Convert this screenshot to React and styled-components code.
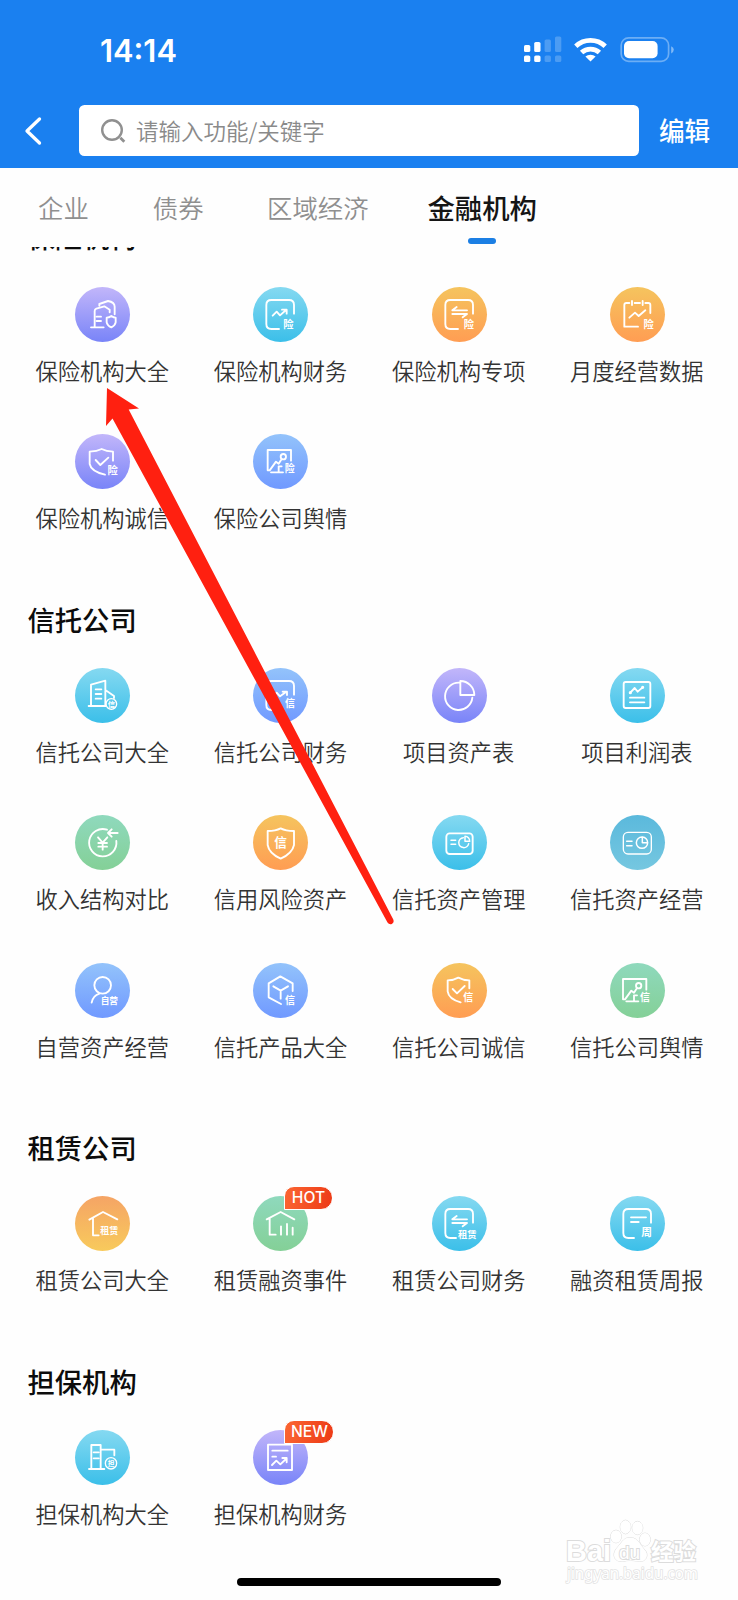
import React from 'react';
import styled, { createGlobalStyle } from 'styled-components';

const GlobalStyle = createGlobalStyle`
  * { box-sizing: border-box; }
  body {
    margin: 0;
    background: #fff;
    font-family: "Noto Sans CJK SC", "Noto Sans", sans-serif;
  }
`;

const Screen = styled.div`
  position: relative;
  width: 738px;
  height: 1600px;
  overflow: hidden;
  background: #fefefe;
  display: flex;
  flex-direction: column;
`;

const Header = styled.header`
  flex: none;
  height: 168px;
  background: #1a80f0;
  color: #fff;
`;

const StatusBar = styled.div`
  height: 105px;
  padding: 32px 64px 0 100px;
  display: flex;
  justify-content: space-between;
  align-items: flex-start;
`;

const Clock = styled.span`
  padding-top: 0.6px;
  font: 600 30.8px/36px Inter, sans-serif;
`;

const StatusIcons = styled.svg`
  display: block;
  width: 152px;
  height: 36px;
`;

const SearchRow = styled.div`
  display: flex;
  align-items: center;
  height: 51px;
`;

const BackButton = styled.button`
  width: 79px;
  height: 51px;
  padding: 0 0 0 23px;
  border: 0;
  background: none;
  text-align: left;
  svg { display: block; }
`;

const SearchBox = styled.div`
  width: 559.5px;
  height: 51px;
  border-radius: 5.5px;
  background: #fff;
  display: flex;
  align-items: center;
  padding: 0 0 2px 21px;
  gap: 10px;
  color: #8a8a8a;
  font-size: 22.5px;
  line-height: 30px;
  font-weight: 350;
  svg { display: block; flex: none; }
`;

const EditButton = styled.button`
  border: 0;
  background: none;
  padding: 0 0 2px;
  margin-left: 20.5px;
  color: #fff;
  font: 500 25.6px/34px "Noto Sans CJK SC", sans-serif;
`;

const Tabs = styled.nav`
  flex: none;
  height: 79px;
  background: #fefefe;
  padding: 19px 0 0 38px;
  display: flex;
  align-items: flex-start;
`;

const Tab = styled.div`
  display: flex;
  flex-direction: column;
  align-items: center;
  gap: 11.3px;
  margin-right: ${(p) => p.$after || 0}px;
  font-size: ${(p) => (p.$active ? 27.4 : 25.4)}px;
  font-weight: ${(p) => (p.$active ? 500 : 350)};
  line-height: 40px;
  color: ${(p) => (p.$active ? '#151515' : '#8f8f8f')};
`;

const TabMark = styled.i`
  width: 27.5px;
  height: 5.6px;
  border-radius: 3px;
  background: #1c7fe4;
`;

const Content = styled.main`
  flex: 1;
  overflow: hidden;
`;

const Sections = styled.div`
  margin-top: -46.2px;
`;

const SectionTitle = styled.h2`
  margin: 0;
  height: 86.2px;
  padding: ${(p) => (p.$scrolled ? 14.7 : 16.8)}px 0 0 27.5px;
  font-size: 27.3px;
  line-height: 40px;
  font-weight: 500;
  color: #0c0c0c;
`;

const Grid = styled.div`
  display: grid;
  grid-template-columns: repeat(4, 178.2px);
  grid-auto-rows: 147.4px;
  padding-left: 13.7px;
`;

const Tile = styled.div`
  display: flex;
  flex-direction: column;
  align-items: center;
`;

const TONES = {
  purple: ['#c2b6fa', '#7984f8'],
  cyan: ['#85d9f1', '#3bbfe9'],
  orange: ['#f5c45e', '#ff9d53'],
  blue: ['#93c3fb', '#7099ff'],
  green: ['#8fd9bd', '#84d097'],
  teal: ['#5bb9dc', '#75c7e0'],
  amber: ['#f5a465', '#f8ca5c'],
};

const Disc = styled.div`
  position: relative;
  width: 55px;
  height: 55px;
  border-radius: 50%;
  background: linear-gradient(${(p) => TONES[p.$tone].join(', ')});
`;

const Glyph = styled.svg`
  display: block;
  width: 55px;
  height: 55px;
  fill: none;
  stroke: #fff;
  stroke-width: 5.6;
  stroke-linejoin: round;
  stroke-linecap: round;
  text {
    fill: #fff;
    stroke: none;
    font-family: "Noto Sans CJK SC", sans-serif;
    font-weight: 700;
    text-anchor: middle;
  }
`;

const Badge = styled.span`
  position: absolute;
  left: 31px;
  top: -10px;
  height: 24px;
  padding: 0 ${(p) => p.$pad}px;
  border: 1px solid #fff;
  border-radius: 10px 12px 12px 0;
  background: linear-gradient(100deg, #fb6632, #ed3a16);
  color: #fff;
  font: 500 15.6px/22.5px Inter, "Liberation Sans", sans-serif;
  white-space: nowrap;
`;

const Label = styled.span`
  margin: 13px 1px 0 0;
  font-size: 22.25px;
  line-height: 30px;
  font-weight: 350;
  color: #333;
  white-space: nowrap;
`;

const Pointer = styled.svg`
  position: absolute;
  left: 100px;
  top: 380px;
  width: 300px;
  height: 550px;
`;

const HomeIndicator = styled.div`
  position: absolute;
  left: 237px;
  top: 1578px;
  width: 264px;
  height: 8px;
  border-radius: 4px;
  background: #000;
`;

const Watermark = styled.svg`
  position: absolute;
  left: 560px;
  top: 1514px;
  width: 146px;
  height: 76px;
  fill: #fff;
  stroke: #dcdcdc;
  stroke-width: 1;
  paint-order: stroke;
`;

const Mark = ({ x, y, size = 31, children }) => (
  <text x={x} y={y + size * 0.37} fontSize={size}>{children}</text>
);

const Frame = ({ end = 78 }) => (
  <path d={`M${end} 126H55Q40 126 40 111V54Q40 39 55 39H108Q123 39 123 54V80`} />
);

const Screenboard = () => (
  <path d="M114 80V48H44V109H50L69 83L77 89L86 75M99 68A8 8 0 1 1 83 68A8 8 0 1 1 99 68M86 97H77V115M54 115H90" />
);

const ICONS = {
  buildingShield: (
    <path d="M59 119V72Q59 67 64 65L88 58L104 68V76M73 56V51L99 42Q119 45 119 59V82M48 121H86M65 89H78M65 102H78M109 87Q116 92 122 92V106Q120 116 109 121Q97 116 95 106V92Q102 92 109 87Z" />
  ),
  chartRisk: (
    <>
      <Frame />
      <path d="M59 86L71 74L81 85L99 69M87 68H101V80" />
      <Mark x={106} y={112}>险</Mark>
    </>
  ),
  swapRisk: (
    <>
      <Frame />
      <path d="M105 70H61L74 60M61 81H105L92 91" />
      <Mark x={111} y={112}>险</Mark>
    </>
  ),
  calendarRisk: (
    <>
      <path d="M84 119H43V54Q43 48 49 48H58M74 48H90M106 48H115Q121 48 121 54V78M66 42V54M98 42V54M58 92L75 77L86 87L106 70" />
      <Mark x={116} y={112}>险</Mark>
    </>
  ),
  shieldRisk: (
    <>
      <path d="M114 80V53Q94 52 80 45Q66 52 44 53V90Q48 112 90 122M62 78L76 93L100 71" />
      <Mark x={113} y={110}>险</Mark>
    </>
  ),
  screenRisk: (
    <>
      <Screenboard />
      <Mark x={110} y={104} size={30}>险</Mark>
    </>
  ),
  buildingTrust: (
    <>
      <path d="M48 114V50L91 38V114M91 66L117 84V90M41 114H92M62 64H79M62 78H79M62 92H79" />
      <circle cx="109" cy="108" r="16" strokeWidth="4" />
      <Mark x={109} y={108} size={22}>信</Mark>
    </>
  ),
  chartTrust: (
    <>
      <Frame end={66} />
      <path d="M59 86L71 74L81 85L99 72M89 71H102V81" />
      <Mark x={111} y={107} size={30}>信</Mark>
    </>
  ),
  pie: <path d="M81 44A41 41 0 1 0 121 89M85 39V81H127A42 42 0 0 0 85 39Z" />,
  report: (
    <>
      <rect x="41" y="42" width="80" height="78" rx="6" />
      <path d="M61 74L74 60L83 71L98 58M60 89H103M60 103H103" />
      <circle cx="61" cy="74" r="2" />
      <circle cx="98" cy="58" r="2" />
    </>
  ),
  yuan: (
    <path d="M96 44A41 41 0 1 0 124 78M128 54H99M110 43L99 54L110 65M69 67L83 83L97 67M83 83V104M70 84H96M70 95H96" />
  ),
  shieldTrust: (
    <>
      <path d="M83 40Q98 48 123 48V90Q118 115 83 131Q48 115 44 90V48Q68 48 83 40Z" />
      <Mark x={83} y={83} size={38}>信</Mark>
    </>
  ),
  card: (
    <>
      <rect x="43" y="55" width="79" height="62" rx="10" />
      <path strokeWidth="4.5" d="M57 76H71M57 88H71M94 68A15 15 0 1 0 110 86M99 64V79H113A14 14 0 0 0 99 64Z" />
    </>
  ),
  cardThin: (
    <>
      <rect x="40" y="52" width="84" height="65" rx="14" strokeWidth="4" />
      <path strokeWidth="4.5" d="M50 79H66M50 92H66M96 66A17 17 0 1 0 113 83M97 66V83H113A17 17 0 0 0 97 66Z" />
    </>
  ),
  person: (
    <>
      <circle cx="83" cy="67" r="25" />
      <path d="M73 92Q54 98 50 119" />
      <Mark x={103} y={112} size={26}>自营</Mark>
    </>
  ),
  cubeTrust: (
    <>
      <path d="M119 84V61L82 40L47 61V103L84 123M61 70L83 83L105 70M83 83V107" />
      <Mark x={111} y={111} size={30}>信</Mark>
    </>
  ),
  shieldCheckTrust: (
    <>
      <path d="M112 76V52Q94 52 79 44Q65 52 47 52V85Q50 108 86 118M62 78L75 91L98 69" />
      <Mark x={109} y={104} size={30}>信</Mark>
    </>
  ),
  screenTrust: (
    <>
      <g transform="translate(-5 0)"><Screenboard /></g>
      <Mark x={105} y={104} size={30}>信</Mark>
    </>
  ),
  houseLease: (
    <>
      <path d="M43 71L84 48L127 70M54 68V118H71" />
      <Mark x={103} y={105} size={27}>租赁</Mark>
    </>
  ),
  houseBars: (
    <path d="M41 70L83 48L124 70M50 68V116H68M84 91V116M102 84V116M119 95V116" />
  ),
  swapLease: (
    <>
      <Frame end={72} />
      <path d="M105 70H61L74 60M61 81H105L92 91" />
      <Mark x={106} y={117} size={28}>租赁</Mark>
    </>
  ),
  docWeek: (
    <>
      <Frame end={72} />
      <path d="M63 64H108M63 78H86" />
      <Mark x={110} y={109} size={32}>周</Mark>
    </>
  ),
  buildingGuarantee: (
    <>
      <path d="M49 117V45H77V117M77 59H118V76M42 117H88M56 67H71M56 85H71" />
      <circle cx="108" cy="100" r="17" strokeWidth="4" />
      <Mark x={108} y={100} size={20}>担</Mark>
    </>
  ),
  reportTrend: (
    <path d="M45 44H117V120H45ZM58 62H104M58 80H69M57 105L70 92L82 103L99 87M88 84H101V97" />
  ),
};

const SECTIONS = [
  {
    title: '保险机构',
    items: [
      ['保险机构大全', 'purple', 'buildingShield'],
      ['保险机构财务', 'cyan', 'chartRisk'],
      ['保险机构专项', 'orange', 'swapRisk'],
      ['月度经营数据', 'orange', 'calendarRisk'],
      ['保险机构诚信', 'purple', 'shieldRisk'],
      ['保险公司舆情', 'blue', 'screenRisk'],
    ],
  },
  {
    title: '信托公司',
    items: [
      ['信托公司大全', 'cyan', 'buildingTrust'],
      ['信托公司财务', 'blue', 'chartTrust'],
      ['项目资产表', 'purple', 'pie'],
      ['项目利润表', 'cyan', 'report'],
      ['收入结构对比', 'green', 'yuan'],
      ['信用风险资产', 'orange', 'shieldTrust'],
      ['信托资产管理', 'cyan', 'card'],
      ['信托资产经营', 'teal', 'cardThin'],
      ['自营资产经营', 'blue', 'person'],
      ['信托产品大全', 'blue', 'cubeTrust'],
      ['信托公司诚信', 'orange', 'shieldCheckTrust'],
      ['信托公司舆情', 'green', 'screenTrust'],
    ],
  },
  {
    title: '租赁公司',
    items: [
      ['租赁公司大全', 'amber', 'houseLease'],
      ['租赁融资事件', 'green', 'houseBars', 'HOT'],
      ['租赁公司财务', 'cyan', 'swapLease'],
      ['融资租赁周报', 'cyan', 'docWeek'],
    ],
  },
  {
    title: '担保机构',
    items: [
      ['担保机构大全', 'cyan', 'buildingGuarantee'],
      ['担保机构财务', 'purple', 'reportTrend', 'NEW'],
    ],
  },
];

const FeatureTile = ({ label, tone, icon, badge }) => (
  <Tile>
    <Disc $tone={tone}>
      <Glyph viewBox="0 0 165 165">{ICONS[icon]}</Glyph>
      {badge && <Badge $pad={badge === 'HOT' ? 6.4 : 5.5}>{badge}</Badge>}
    </Disc>
    <Label>{label}</Label>
  </Tile>
);

const StatusGlyphs = () => (
  <StatusIcons viewBox="522 32 152 36" fill="#fff">
    <rect x="524" y="45" width="6.3" height="7" rx="1.6" />
    <rect x="524" y="55.5" width="6.3" height="6.5" rx="1.6" />
    <rect x="534.2" y="42" width="6.3" height="10" rx="1.6" />
    <rect x="534.2" y="55.5" width="6.3" height="6.5" rx="1.6" />
    <g opacity="0.22">
      <rect x="544.6" y="39.5" width="6.3" height="12.5" rx="1.6" />
      <rect x="544.6" y="55.5" width="6.3" height="6.5" rx="1.6" />
      <rect x="555" y="36.5" width="6.3" height="15.5" rx="1.6" />
      <rect x="555" y="55.5" width="6.3" height="6.5" rx="1.6" />
    </g>
    <g fill="none" stroke="#fff" strokeWidth="4.8">
      <path d="M575.8 46.2A21.5 21.5 0 0 1 605.2 46.2" />
      <path d="M581.6 52.6A13 13 0 0 1 599.4 52.6" />
    </g>
    <path d="M585.4 56.6A7.6 7.6 0 0 1 595.6 56.6L590.5 61.4Z" />
    <rect x="621.2" y="37.8" width="47.4" height="23.6" rx="7.5" fill="none" stroke="#fff" strokeOpacity="0.36" strokeWidth="1.7" />
    <rect x="624" y="41" width="33.6" height="17.3" rx="5" />
    <path d="M671.2 46.2Q673.8 47.3 673.8 49.8Q673.8 52.2 671.2 53.4Z" opacity="0.45" />
  </StatusIcons>
);

const BaiduMark = () => (
  <Watermark viewBox="560 1514 146 76">
    <text x="566" y="1561" fontSize="30" fontWeight="700" fontFamily="Liberation Sans, sans-serif" textLength="45" lengthAdjust="spacingAndGlyphs" strokeWidth="2">Bai</text>
    <ellipse cx="616" cy="1536.5" rx="5.3" ry="6.3" />
    <ellipse cx="625.5" cy="1527" rx="5.3" ry="6.8" />
    <ellipse cx="637.5" cy="1528" rx="5.3" ry="6.6" />
    <ellipse cx="645" cy="1539.5" rx="5.3" ry="6.4" />
    <path d="M630 1537.5C638 1537.5 640 1545 644 1549C650 1555 646 1562 639 1561.5C632 1560 628 1560 623 1561.5C614 1562 612 1555 616 1549C621 1544 623 1537.5 630 1537.5Z" />
    <text x="619" y="1558.5" fontSize="19" fontFamily="Liberation Sans, sans-serif" strokeWidth="2">du</text>
    <text x="651" y="1559.5" fontSize="22.5" fontWeight="700" fontFamily="Noto Sans CJK SC, sans-serif" strokeWidth="2">经验</text>
    <text x="567" y="1579" fontSize="17" fontFamily="Noto Sans, sans-serif" textLength="131" lengthAdjust="spacingAndGlyphs" stroke="#e2e2e2" strokeWidth="1.6">jingyan.baidu.com</text>
  </Watermark>
);

export default function App() {
  return (
    <>
      <GlobalStyle />
      <Screen>
        <Header>
          <StatusBar>
            <Clock>14:14</Clock>
            <StatusGlyphs />
          </StatusBar>
          <SearchRow>
            <BackButton aria-label="返回">
              <svg width="20" height="30" viewBox="0 0 20 30" fill="none" stroke="#fff" strokeWidth="3.3" strokeLinecap="round" strokeLinejoin="round">
                <path d="M16.5 3L4 15L16.5 27" />
              </svg>
            </BackButton>
            <SearchBox>
              <svg width="26" height="26" viewBox="0 0 26 26" fill="none" stroke="#909090" strokeWidth="2.4">
                <circle cx="12" cy="13" r="9.8" />
                <path d="M20.3 20.8L24.3 24.8" strokeWidth="2.8" />
              </svg>
              请输入功能/关键字
            </SearchBox>
            <EditButton>编辑</EditButton>
          </SearchRow>
        </Header>
        <Tabs>
          <Tab $after={64}>企业</Tab>
          <Tab $after={63.5}>债券</Tab>
          <Tab $after={58.8}>区域经济</Tab>
          <Tab $active>金融机构<TabMark /></Tab>
        </Tabs>
        <Content>
          <Sections>
            {SECTIONS.map((section, index) => (
              <section key={section.title}>
                <SectionTitle $scrolled={index === 0}>{section.title}</SectionTitle>
                <Grid>
                  {section.items.map(([label, tone, icon, badge]) => (
                    <FeatureTile key={label} label={label} tone={tone} icon={icon} badge={badge} />
                  ))}
                </Grid>
              </section>
            ))}
          </Sections>
        </Content>
        <BaiduMark />
        <HomeIndicator />
        <Pointer viewBox="100 380 300 550">
          <path fill="#ff2010" d="M107 388L139 408.5L128.7 409.5L393.3 919.5Q394.5 922.5 391.8 924Q389 924.8 387.5 922.5L112.5 418.5L106 426Z" />
        </Pointer>
      </Screen>
    </>
  );
}
